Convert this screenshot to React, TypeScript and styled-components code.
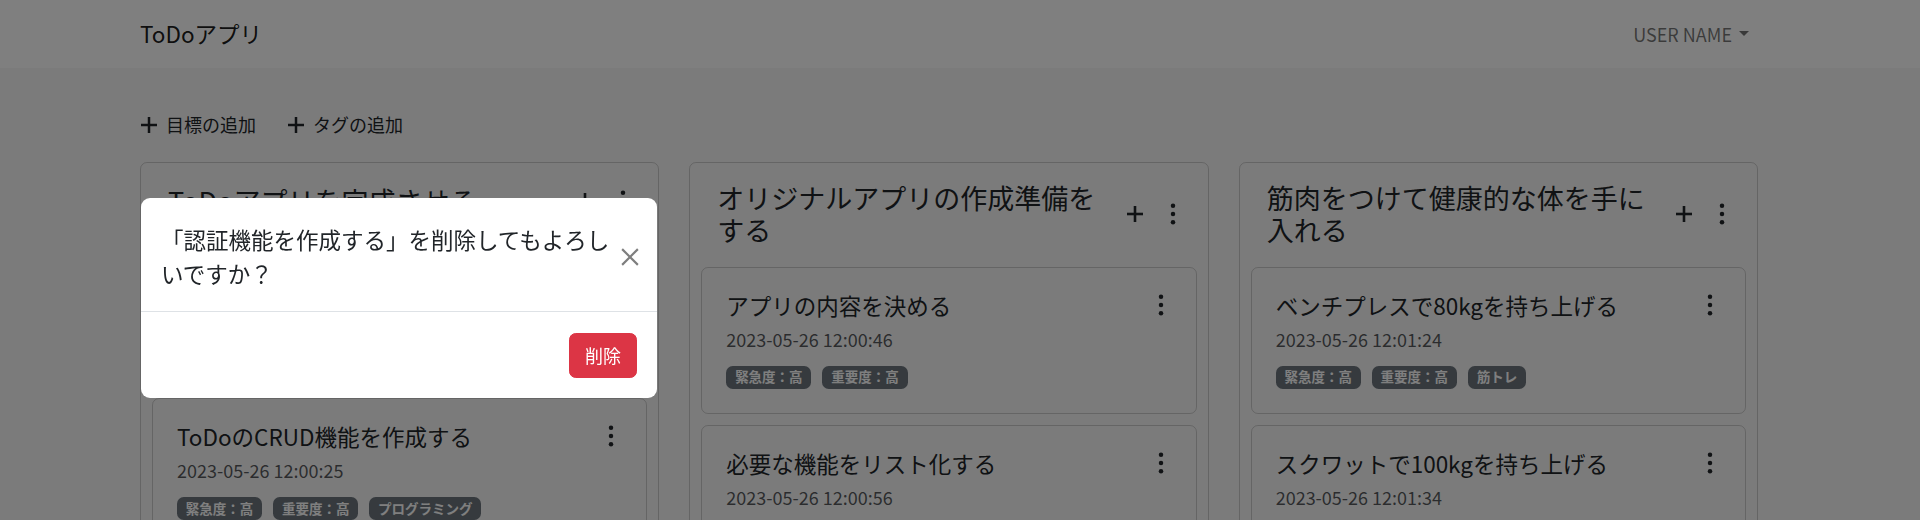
import React from "react";
import styled, { createGlobalStyle } from "styled-components";

const GlobalStyle = createGlobalStyle`
  html, body {
    margin: 0;
    height: 100%;
    overflow: hidden;
  }
  body {
    font-family: "Noto Sans CJK JP", "Noto Sans", sans-serif;
    font-size: 18px;
    line-height: 1.5;
    color: #212529;
    background: #f7f7f7;
  }
  * { box-sizing: border-box; }
`;

const Navbar = styled.header`
  height: 68px;
  background: #ffffff;
  display: flex;
  align-items: center;
  justify-content: space-between;
  padding: 0 162px 0 140px;
`;

const Brand = styled.div`
  font-size: 22.5px;
  line-height: 1.5;
  color: rgba(0, 0, 0, 0.9);
`;

const UserMenu = styled.div`
  display: flex;
  align-items: center;
  gap: 7px;
  padding: 0 9px;
  font-size: 18px;
  color: rgba(0, 0, 0, 0.55);
`;

const Caret = styled.span`
  width: 0;
  height: 0;
  border-left: 5px solid transparent;
  border-right: 5px solid transparent;
  border-top: 5.4px solid rgba(0, 0, 0, 0.55);
  margin-top: -2px;
`;

const Main = styled.main`
  padding: 0 162px 0 140px;
`;

const Toolbar = styled.div`
  display: flex;
  gap: 31px;
  margin-top: 43px;
  margin-bottom: 24px;
  height: 27px;
  align-items: center;
`;

const ToolButton = styled.div`
  display: flex;
  align-items: center;
  gap: 8px;
  font-size: 18px;
  line-height: 27px;
  color: #212529;
`;

const Board = styled.div`
  display: grid;
  grid-template-columns: repeat(3, 1fr);
  gap: 30px;
  align-items: start;
`;

const Column = styled.section`
  border: 1px solid rgba(0, 0, 0, 0.175);
  border-radius: 7px;
  padding: 0 11px 11px;
`;

const ColumnHeader = styled.div`
  display: flex;
  align-items: center;
  gap: 12px;
  padding: 19px 12px 20px 16px;
`;

const ColumnTitle = styled.h4`
  flex: 1;
  margin: 0;
  font-size: 27px;
  font-weight: 400;
  line-height: 1.2;
  color: #212529;
`;

const IconGroup = styled.div`
  display: flex;
  align-items: center;
  gap: 14px;
  height: 38px;
`;

const IconButton = styled.span`
  display: flex;
  align-items: center;
  justify-content: center;
  width: 24px;
  height: 24px;
  color: #212529;
`;

const CardList = styled.div`
  display: flex;
  flex-direction: column;
  gap: 11px;
`;

const Card = styled.article`
  border: 1px solid rgba(0, 0, 0, 0.175);
  border-radius: 7px;
  padding: 24px 23px 24px 24px;
`;

const CardHead = styled.div`
  display: flex;
  align-items: center;
  justify-content: space-between;
  margin-bottom: 7px;
`;

const CardTitle = styled.h5`
  margin: 0;
  font-size: 22.5px;
  font-weight: 400;
  line-height: 1.2;
  color: #212529;
`;

const CardDate = styled.div`
  font-size: 18px;
  line-height: 27px;
  color: rgba(33, 37, 41, 0.75);
`;

const Tags = styled.div`
  display: flex;
  flex-wrap: wrap;
  gap: 11px;
  margin-top: 13px;
`;

const Badge = styled.span`
  display: inline-block;
  background: #6c757d;
  color: #ffffff;
  font-size: 13.5px;
  line-height: 1;
  font-weight: 700;
  padding: 4.7px 8.8px;
  border-radius: 6.75px;
`;

const Backdrop = styled.div`
  position: fixed;
  inset: 0;
  background: rgba(0, 0, 0, 0.5);
  z-index: 10;
`;

const Modal = styled.div`
  position: fixed;
  left: 141px;
  top: 198px;
  width: 516px;
  background: #ffffff;
  border-radius: 9px;
  z-index: 20;
  overflow: hidden;
`;

const ModalHeader = styled.div`
  display: flex;
  align-items: center;
  padding: 25px 14px 20.5px 20px;
  border-bottom: 1px solid #dee2e6;
`;

const ModalTitle = styled.h5`
  flex: 1;
  margin: 0;
  font-size: 22.5px;
  font-weight: 400;
  line-height: 1.5;
  color: #212529;
`;

const CloseButton = styled.span`
  display: flex;
  align-items: center;
  justify-content: center;
  width: 27px;
  height: 27px;
  opacity: 0.5;
`;

const ModalFooter = styled.div`
  display: flex;
  justify-content: flex-end;
  padding: 21px 20px 20px;
`;

const DangerButton = styled.button`
  font-family: inherit;
  font-size: 18px;
  line-height: 27px;
  padding: 8px 15px;
  border: 1px solid #dc3545;
  background: #dc3545;
  color: #ffffff;
  border-radius: 6.75px;
`;

const PlusIcon = ({ size = 24, len = 16, stroke = 2.6 }: { size?: number; len?: number; stroke?: number }) => {
  const a = (size - len) / 2;
  const b = a + len;
  const c = size / 2;
  return (
    <svg width={size} height={size} viewBox={`0 0 ${size} ${size}`} fill="none">
      <line x1={c} y1={a} x2={c} y2={b} stroke="#212529" strokeWidth={stroke} />
      <line x1={a} y1={c} x2={b} y2={c} stroke="#212529" strokeWidth={stroke} />
    </svg>
  );
};

const KebabIcon = () => (
  <svg width={24} height={24} viewBox="0 0 16 16" fill="#212529">
    <circle cx="8" cy="2.5" r="1.5" />
    <circle cx="8" cy="8" r="1.5" />
    <circle cx="8" cy="13.5" r="1.5" />
  </svg>
);

const CloseIcon = () => (
  <svg width={18} height={18} viewBox="0 0 16 16" fill="none">
    <path d="M1 1L15 15M15 1L1 15" stroke="#000" strokeWidth="1.9" />
  </svg>
);

type Todo = { title: string; date: string; tags: string[] };
type Goal = { title: string; todos: Todo[] };

const goals: Goal[] = [
  {
    title: "ToDoアプリを完成させる",
    todos: [
      { title: "認証機能を作成する", date: "2023-05-26 12:00:15", tags: ["緊急度：高", "重要度：高", "プログラミング"] },
      { title: "ToDoのCRUD機能を作成する", date: "2023-05-26 12:00:25", tags: ["緊急度：高", "重要度：高", "プログラミング"] },
      { title: "デザインを整える", date: "2023-05-26 12:00:35", tags: ["緊急度：中", "重要度：中"] },
    ],
  },
  {
    title: "オリジナルアプリの作成準備をする",
    todos: [
      { title: "アプリの内容を決める", date: "2023-05-26 12:00:46", tags: ["緊急度：高", "重要度：高"] },
      { title: "必要な機能をリスト化する", date: "2023-05-26 12:00:56", tags: ["緊急度：高", "重要度：高"] },
    ],
  },
  {
    title: "筋肉をつけて健康的な体を手に入れる",
    todos: [
      { title: "ベンチプレスで80kgを持ち上げる", date: "2023-05-26 12:01:24", tags: ["緊急度：高", "重要度：高", "筋トレ"] },
      { title: "スクワットで100kgを持ち上げる", date: "2023-05-26 12:01:34", tags: ["緊急度：高", "重要度：高", "筋トレ"] },
    ],
  },
];

export default function App() {
  return (
    <>
      <GlobalStyle />
      <Navbar>
        <Brand>ToDoアプリ</Brand>
        <UserMenu>
          USER NAME
          <Caret />
        </UserMenu>
      </Navbar>
      <Main>
        <Toolbar>
          <ToolButton>
            <PlusIcon size={18} len={16} stroke={2.5} />
            目標の追加
          </ToolButton>
          <ToolButton>
            <PlusIcon size={18} len={16} stroke={2.5} />
            タグの追加
          </ToolButton>
        </Toolbar>
        <Board>
          {goals.map((g) => (
            <Column key={g.title}>
              <ColumnHeader>
                <ColumnTitle>{g.title}</ColumnTitle>
                <IconGroup>
                  <IconButton>
                    <PlusIcon />
                  </IconButton>
                  <IconButton>
                    <KebabIcon />
                  </IconButton>
                </IconGroup>
              </ColumnHeader>
              <CardList>
                {g.todos.map((t) => (
                  <Card key={t.title}>
                    <CardHead>
                      <CardTitle>{t.title}</CardTitle>
                      <IconButton>
                        <KebabIcon />
                      </IconButton>
                    </CardHead>
                    <CardDate>{t.date}</CardDate>
                    <Tags>
                      {t.tags.map((tag) => (
                        <Badge key={tag}>{tag}</Badge>
                      ))}
                    </Tags>
                  </Card>
                ))}
              </CardList>
            </Column>
          ))}
        </Board>
      </Main>
      <Backdrop />
      <Modal>
        <ModalHeader>
          <ModalTitle>「認証機能を作成する」を削除してもよろしいですか？</ModalTitle>
          <CloseButton>
            <CloseIcon />
          </CloseButton>
        </ModalHeader>
        <ModalFooter>
          <DangerButton>削除</DangerButton>
        </ModalFooter>
      </Modal>
    </>
  );
}
